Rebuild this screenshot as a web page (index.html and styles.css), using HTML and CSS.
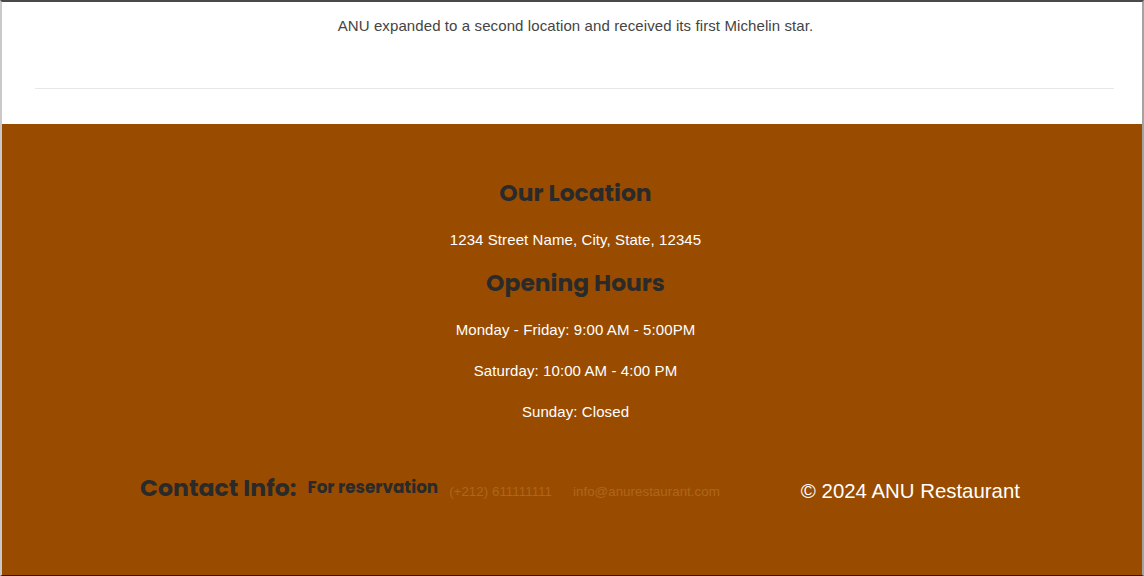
FILE: index.html
```html
<!DOCTYPE html>
<html lang="en">
<head>
<meta charset="utf-8">
<title>ANU Restaurant</title>
<link rel="stylesheet" href="styles.css">
</head>
<body>
<div class="frame">
  <section class="history">
    <p class="history-text">ANU expanded to a second location and received its first Michelin star.</p>
    <hr class="divider">
  </section>
  <footer class="footer">
    <h2 class="footer-title">Our Location</h2>
    <p class="footer-line address">1234 Street Name, City, State, 12345</p>
    <h2 class="footer-title hours-title">Opening Hours</h2>
    <p class="footer-line hours first">Monday - Friday: 9:00 AM - 5:00PM</p>
    <p class="footer-line hours">Saturday: 10:00 AM - 4:00 PM</p>
    <p class="footer-line hours">Sunday: Closed</p>
    <div class="bottom-row">
      <div class="contact">
        <h3 class="contact-title">Contact Info:</h3>
        <h4 class="contact-sub">For reservation</h4>
        <a class="contact-link phone" href="#">(+212) 611111111</a>
        <a class="contact-link" href="#">info@anurestaurant.com</a>
      </div>
      <p class="copyright">© 2024 ANU Restaurant</p>
    </div>
  </footer>
</div>
</body>
</html>
```

FILE: styles.css
```css
html, body {
  margin: 0;
  padding: 0;
  background: #ffffff;
}

.frame {
  box-sizing: border-box;
  width: 1144px;
  height: 576px;
  border-top: 2px solid #4a4a4a;
  border-left: 2px solid #c9c9c9;
  border-right: 2px solid #a3a3a3;
  border-bottom: 1px solid #1e1e1e;
  display: flex;
  flex-direction: column;
  overflow: hidden;
  font-family: "Liberation Sans", Arial, sans-serif;
}

.history {
  height: 122px;
  flex: none;
  box-sizing: border-box;
  padding-top: 15px;
  padding-left: 7px;
}

.history-text {
  margin: 0;
  text-align: center;
  font-size: 15px;
  line-height: 18px;
  letter-spacing: 0.1px;
  color: #444444;
}

.divider {
  margin: 53px 28px 0 26px;
  border: 0;
  border-top: 1px solid #e8e8e8;
  height: 0;
}

.footer {
  flex: 1;
  background: #994c00;
  display: flex;
  flex-direction: column;
  align-items: center;
  padding-top: 53px;
  padding-left: 7px;
}

.footer-title {
  margin: 0;
  font-family: "Poppins", "Inter", sans-serif;
  font-weight: 700;
  font-size: 23.4px;
  line-height: 32px;
  color: #2a2a2a;
}

.footer-line {
  margin: 0;
  font-size: 15px;
  line-height: 18px;
  letter-spacing: 0.09px;
  color: #ffffff;
}

.address {
  margin-top: 22px;
}

.hours-title {
  margin-top: 18px;
}

.hours {
  margin-top: 23px;
}

.hours.first {
  margin-top: 22px;
}

.bottom-row {
  align-self: stretch;
  display: flex;
  align-items: center;
  gap: 81px;
  padding-left: 131px;
  margin-top: 52px;
}

.contact {
  display: flex;
  align-items: center;
}

.contact-title {
  margin: 0 11px 0 0;
  font-family: "Poppins", "Inter", sans-serif;
  font-weight: 700;
  font-size: 23.6px;
  line-height: 30px;
  color: #2a2a2a;
}

.contact-sub {
  margin: 0 11px 2px 0;
  font-family: "Poppins", "Inter", sans-serif;
  font-weight: 700;
  font-size: 16.8px;
  line-height: 24px;
  color: #2a2a2a;
}

.contact-link {
  font-size: 13.4px;
  line-height: 16px;
  color: #ad661c;
  text-decoration: none;
  margin-top: 8px;
}

.contact-link.phone {
  margin-right: 21px;
}

.copyright {
  margin: 6px 0 0 0;
  font-size: 20.4px;
  line-height: 24px;
  color: #ffffff;
}
```
